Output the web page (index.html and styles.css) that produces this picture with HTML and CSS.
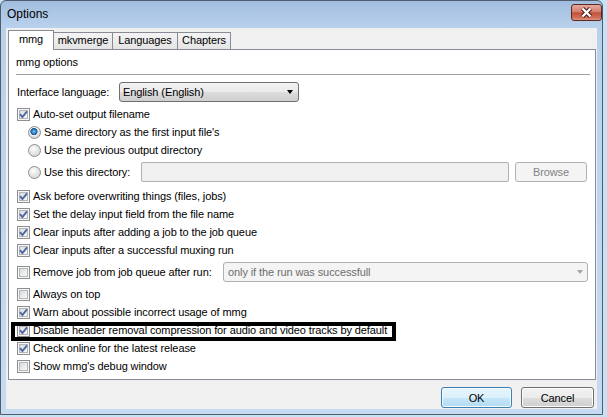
FILE: index.html
```html
<!DOCTYPE html>
<html lang="en">
<head>
    <meta charset="UTF-8">
    <title>Options</title>
    <link rel="stylesheet" href="styles.css">
</head>
<body>
    <div class="window">
        <!-- title bar -->
        <div class="titlebar">
            <span class="title">Options</span>
            <span class="close-btn">
                <svg width="29" height="15" viewBox="0 0 29 15">
                    <path d="M10.5 3.5 L18.5 11.5 M18.5 3.5 L10.5 11.5" stroke="#4a1812" stroke-width="4.4" fill="none"/>
                    <path d="M10.5 3.5 L18.5 11.5 M18.5 3.5 L10.5 11.5" stroke="#fff" stroke-width="2.4" fill="none"/>
                </svg>
            </span>
        </div>

        <div class="client">
            <!-- tabs -->
            <div class="tabs">
                <div class="tab tab-active tab-mmg">mmg</div>
                <div class="tab tab-mkv">mkvmerge</div>
                <div class="tab tab-lang">Languages</div>
                <div class="tab tab-chap">Chapters</div>
            </div>

            <div class="panel">
                <div class="panel-header">mmg options</div>

                <div class="row row-lang">
                    <span class="label-lang">Interface language:</span>
                    <div class="combo">English (English)<span class="arrow"></span></div>
                </div>

                <div class="row row-auto">
                    <span class="cb"><svg class="tick" width="11" height="11" viewBox="0 0 11 11"><path d="M2 5.2 L4.4 8 L9 2.3"/></svg></span>
                    Auto-set output filename
                </div>
                <div class="row radio-row"><span class="radio on"></span>Same directory as the first input file's</div>
                <div class="row radio-row"><span class="radio"></span>Use the previous output directory</div>
                <div class="row radio-row row-dir">
                    <span class="radio"></span>
                    <span class="label-dir">Use this directory:</span>
                    <div class="text-input"></div>
                    <div class="btn btn-disabled btn-browse">Browse</div>
                </div>

                <div class="row row-ask">
                    <span class="cb"><svg class="tick" width="11" height="11" viewBox="0 0 11 11"><path d="M2 5.2 L4.4 8 L9 2.3"/></svg></span>
                    Ask before overwriting things (files, jobs)
                </div>
                <div class="row">
                    <span class="cb"><svg class="tick" width="11" height="11" viewBox="0 0 11 11"><path d="M2 5.2 L4.4 8 L9 2.3"/></svg></span>
                    Set the delay input field from the file name
                </div>
                <div class="row">
                    <span class="cb"><svg class="tick" width="11" height="11" viewBox="0 0 11 11"><path d="M2 5.2 L4.4 8 L9 2.3"/></svg></span>
                    Clear inputs after adding a job to the job queue
                </div>
                <div class="row">
                    <span class="cb"><svg class="tick" width="11" height="11" viewBox="0 0 11 11"><path d="M2 5.2 L4.4 8 L9 2.3"/></svg></span>
                    Clear inputs after a successful muxing run
                </div>
                <div class="row row-remove">
                    <span class="cb"></span>
                    <span class="label-remove">Remove job from job queue after run:</span>
                    <div class="combo combo-disabled">only if the run was successfull<span class="arrow"></span></div>
                </div>
                <div class="row row-top">
                    <span class="cb"></span>
                    Always on top
                </div>
                <div class="row">
                    <span class="cb"><svg class="tick" width="11" height="11" viewBox="0 0 11 11"><path d="M2 5.2 L4.4 8 L9 2.3"/></svg></span>
                    Warn about possible incorrect usage of mmg
                </div>
                <div class="row row-marked">
                    <span class="cb"><svg class="tick" width="11" height="11" viewBox="0 0 11 11"><path d="M2 5.2 L4.4 8 L9 2.3"/></svg></span>
                    Disable header removal compression for audio and video tracks by default
                    <span class="mark"></span>
                </div>
                <div class="row">
                    <span class="cb"><svg class="tick" width="11" height="11" viewBox="0 0 11 11"><path d="M2 5.2 L4.4 8 L9 2.3"/></svg></span>
                    Check online for the latest release
                </div>
                <div class="row">
                    <span class="cb"></span>
                    Show mmg's debug window
                </div>
            </div>

            <!-- OK / Cancel -->
            <div class="buttons">
                <div class="btn btn-default btn-ok">OK</div>
                <div class="btn btn-cancel">Cancel</div>
            </div>
        </div>
    </div>
</body>
</html>
```

FILE: styles.css
```css
/* basic */
body {
    margin: 0;
    width: 607px;
    height: 417px;
    overflow: hidden;
    background-color: #c4e4f5;
    font-family: "Liberation Sans", Arial, sans-serif;
    font-size: 11px;
    letter-spacing: -0.1px;
    color: #000;
}

.window {
    width: 603px;
    height: 415px;
    box-sizing: border-box;
    border: 1px solid #4f5d6e;
    border-radius: 6px 6px 0 0;
    padding: 0 5px 5px 5px;
    background: linear-gradient(#a2bddf, #b9d1ec 27px, #c6dbf1);
    display: flex;
    flex-direction: column;
}

/* title bar */
.titlebar {
    height: 27px;
    margin: 0 -5px 0 -5px;
    display: flex;
    align-items: flex-start;
}

.title {
    font-size: 12px;
    line-height: 16px;
    letter-spacing: 0;
    padding: 5px 0 0 6px;
}

.close-btn {
    margin-left: auto;
    margin-top: 3px;
    width: 31px;
    height: 17px;
    box-sizing: border-box;
    border: 1px solid #5c2820;
    border-radius: 3px;
    background: linear-gradient(#e6aa9e, #d47f6f 45%, #c4503b 52%, #cf705b 85%, #de9580);
    display: flex;
}

.close-btn svg {
    display: block;
}

/* client area */
.client {
    flex: 1;
    background-color: #f0f0f0;
    padding: 2px 1px 0 2px;
    display: flex;
    flex-direction: column;
}

.tabs {
    height: 19px;
    display: flex;
    align-items: flex-end;
}

.tab {
    height: 17px;
    box-sizing: border-box;
    border: 1px solid #898c95;
    border-bottom: none;
    margin-left: -1px;
    background: linear-gradient(#f4f4f4, #e4e4e4);
    text-align: center;
    line-height: 15px;
}

.tab-active {
    height: 20px;
    margin-left: 0;
    margin-bottom: -1px;
    background: #fff;
    line-height: 17px;
    position: relative;
    z-index: 1;
}

.tab-mmg { width: 46px; }
.tab-mkv { width: 60px; }
.tab-lang { width: 66px; }
.tab-chap { width: 54px; }

.panel {
    height: 331px;
    box-sizing: border-box;
    border: 1px solid #898c95;
    background-color: #fff;
    padding: 0 0 0 8px;
}

.panel-header {
    margin: 0 5px 0 -1px;
    padding: 5px 0;
    line-height: 14px;
    border-bottom: 1px solid #a0a0a0;
}

/* rows */
.row {
    height: 18px;
    display: flex;
    align-items: center;
    white-space: nowrap;
}

.row-lang {
    height: 20px;
    margin-top: 7px;
}

.row-auto { margin-top: 3px; }

.radio-row { padding-left: 11px; }

.row-dir {
    height: 20px;
    margin-top: 3px;
}

.row-ask { margin-top: 5px; }

.row-remove {
    height: 20px;
    margin-top: 3px;
}

.row-top { margin-top: 3px; }

.row-marked { position: relative; }

/* annotation box drawn over the row */
.mark {
    position: absolute;
    left: -6px;
    top: 1px;
    width: 385px;
    height: 19px;
    box-sizing: border-box;
    border: 4px solid #000;
}

.label-lang { width: 102px; }
.label-dir { width: 97px; }
.label-remove { width: 190px; }

/* checkbox */
.cb {
    width: 13px;
    height: 13px;
    flex: none;
    box-sizing: border-box;
    margin-right: 3px;
    border: 1px solid #8e8f8f;
    background: linear-gradient(135deg, #cfd2d6, #f6f6f6 75%);
    box-shadow: inset 0 0 0 1px #f7f7f7, inset 0 0 0 2px #b3b6ba;
}

.tick {
    display: block;
}

.tick path {
    fill: none;
    stroke: #4d64a0;
    stroke-width: 1.9;
}

/* radio */
.radio {
    width: 13px;
    height: 13px;
    flex: none;
    box-sizing: border-box;
    margin-right: 3px;
    border: 1px solid #8e8f8f;
    border-radius: 50%;
    background: radial-gradient(circle at 40% 35%, #ffffff, #e9e9e9 40%, #cfcfcf);
}

.radio.on {
    background: radial-gradient(circle at 45% 42%, #9ad6f5 0, #3d95d8 1.4px, #1c5995 3.3px, #f2f2f2 3.9px, #d6d6d6 6px);
}

/* combo boxes */
.combo {
    width: 180px;
    height: 20px;
    box-sizing: border-box;
    border: 1px solid #707070;
    border-radius: 3px;
    padding-left: 3px;
    background: linear-gradient(#f2f2f2, #ebebeb 50%, #dddddd 50%, #cfcfcf);
    display: flex;
    align-items: center;
    position: relative;
}

.combo .arrow {
    margin-left: auto;
    margin-right: 5px;
    width: 0;
    height: 0;
    border-left: 3.5px solid transparent;
    border-right: 3.5px solid transparent;
    border-top: 4px solid #000;
}

.combo-disabled {
    width: 365px;
    border-color: #adb2b5;
    background: #f4f4f4;
    color: #6d6d6d;
    padding-left: 4px;
}

.combo-disabled .arrow {
    border-top-color: #a5a5a5;
    margin-right: 4px;
}

.text-input {
    width: 368px;
    height: 20px;
    box-sizing: border-box;
    border: 1px solid #adb2b5;
    border-radius: 2px;
    background-color: #f0f0f0;
}

/* buttons */
.btn {
    height: 21px;
    box-sizing: border-box;
    border: 1px solid #707070;
    border-radius: 3px;
    background: linear-gradient(#f2f2f2, #ebebeb 50%, #dddddd 50%, #cfcfcf);
    box-shadow: inset 0 0 0 1px #fcfcfc;
    display: flex;
    align-items: center;
    justify-content: center;
}

.btn-browse {
    width: 72px;
    height: 20px;
    margin-left: 6px;
}

.btn-disabled {
    border-color: #adb2b5;
    background: #f4f4f4;
    box-shadow: none;
    color: #838383;
}

.buttons {
    display: flex;
    justify-content: flex-end;
    gap: 9px;
    margin-top: 7px;
    padding-right: 2px;
}

.btn-ok { width: 71px; }
.btn-cancel { width: 73px; }

.btn-default {
    border-color: #3c7fb1;
    background: linear-gradient(#e8f5fc, #dbf0fb 50%, #c6e6f8 50%, #b4dcf3);
    box-shadow: inset 0 0 0 1px #f4fbff;
}
```
